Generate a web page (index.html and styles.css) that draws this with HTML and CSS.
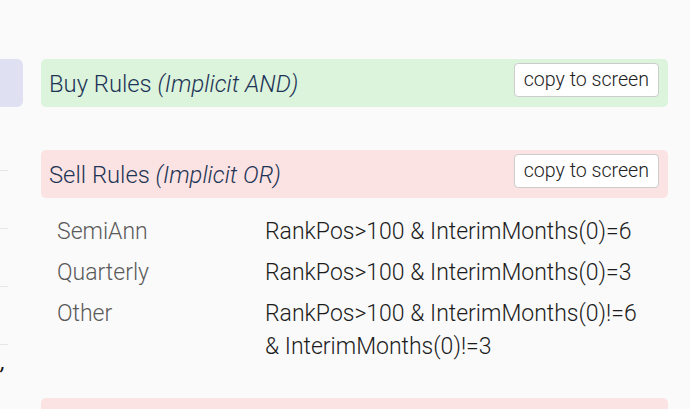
FILE: index.html
```html
<!DOCTYPE html>
<html lang="en">
<head>
    <meta charset="UTF-8">
    <title>Rules</title>
    <link rel="stylesheet" href="styles.css">
</head>
<body>
<div class="page">
    <div class="sidebar">
        <div class="side-tab"></div>
        <div class="side-line first"></div>
        <div class="side-line"></div>
        <div class="side-line"></div>
        <div class="side-line"></div>
        <div class="side-comma">,</div>
    </div>
    <div class="main">
        <div class="rule-head buy">
            <span class="rule-title">Buy Rules <em>(Implicit AND)</em></span>
            <button type="button" class="copy-btn">copy to screen</button>
        </div>
        <div class="rule-head sell">
            <span class="rule-title">Sell Rules <em>(Implicit OR)</em></span>
            <button type="button" class="copy-btn">copy to screen</button>
        </div>
        <table class="rule-table">
            <tr>
                <td class="rule-name">SemiAnn</td>
                <td class="rule-expr">RankPos&gt;100 &amp; InterimMonths(0)=6</td>
            </tr>
            <tr>
                <td class="rule-name">Quarterly</td>
                <td class="rule-expr">RankPos&gt;100 &amp; InterimMonths(0)=3</td>
            </tr>
            <tr>
                <td class="rule-name">Other</td>
                <td class="rule-expr">RankPos&gt;100 &amp; InterimMonths(0)!=6 &amp; InterimMonths(0)!=3</td>
            </tr>
        </table>
        <div class="rule-head sell next"></div>
    </div>
</div>
</body>
</html>
```

FILE: styles.css
```css
body {
    margin: 0;
    overflow: hidden;
    background: #fafafa;
    font-family: Roboto, "Liberation Sans", sans-serif;
    font-weight: 300;
    color: #222;
}

.page {
    display: flex;
    height: 409px;
    overflow: hidden;
}

.sidebar {
    width: 23px;
    flex-shrink: 0;
}

.side-tab {
    margin-top: 59px;
    height: 48px;
    background: #dfe0f1;
    border-radius: 0 6px 6px 0;
}

.side-line {
    width: 8px;
    height: 1px;
    background: #e6e6e6;
    margin-top: 57px;
}

.side-line.first {
    margin-top: 63px;
}

.side-comma {
    margin-top: 6px;
    padding-left: 1px;
    font-size: 22px;
    font-style: italic;
    font-weight: 400;
    line-height: 22px;
    color: #111;
}

.main {
    margin-left: 18px;
    width: 627px;
    flex-shrink: 0;
}

.rule-head {
    display: flex;
    align-items: center;
    justify-content: space-between;
    height: 48px;
    padding: 0 9px 0 8px;
    border-radius: 5px;
    box-sizing: border-box;
}

.rule-head.buy {
    margin-top: 59px;
    background: #dcf3dc;
}

.rule-head.sell {
    margin-top: 43px;
    background: #fce3e3;
}

.rule-head.next {
    margin-top: 31px;
}

.rule-title {
    font-size: 23.8px;
    font-weight: 300;
    color: #1e3556;
    padding-top: 2px;
}

.rule-title em {
    font-style: italic;
}

.copy-btn {
    font-family: Roboto, "Liberation Sans", sans-serif;
    font-size: 19.6px;
    font-weight: 300;
    color: #222;
    background: #fff;
    border: 1px solid #ccc;
    border-radius: 4px;
    height: 34px;
    padding: 0 9px;
    margin-top: -7px;
}

.rule-table {
    border-collapse: collapse;
    margin-top: 13px;
    margin-left: 8px;
    width: 612px;
}

.rule-table td {
    vertical-align: top;
    padding: 4px 8px;
    font-size: 23px;
    line-height: 33px;
}

.rule-name {
    color: #5a5a5a;
    width: 192px;
}

.rule-expr {
    color: #1c1c1c;
}
```
